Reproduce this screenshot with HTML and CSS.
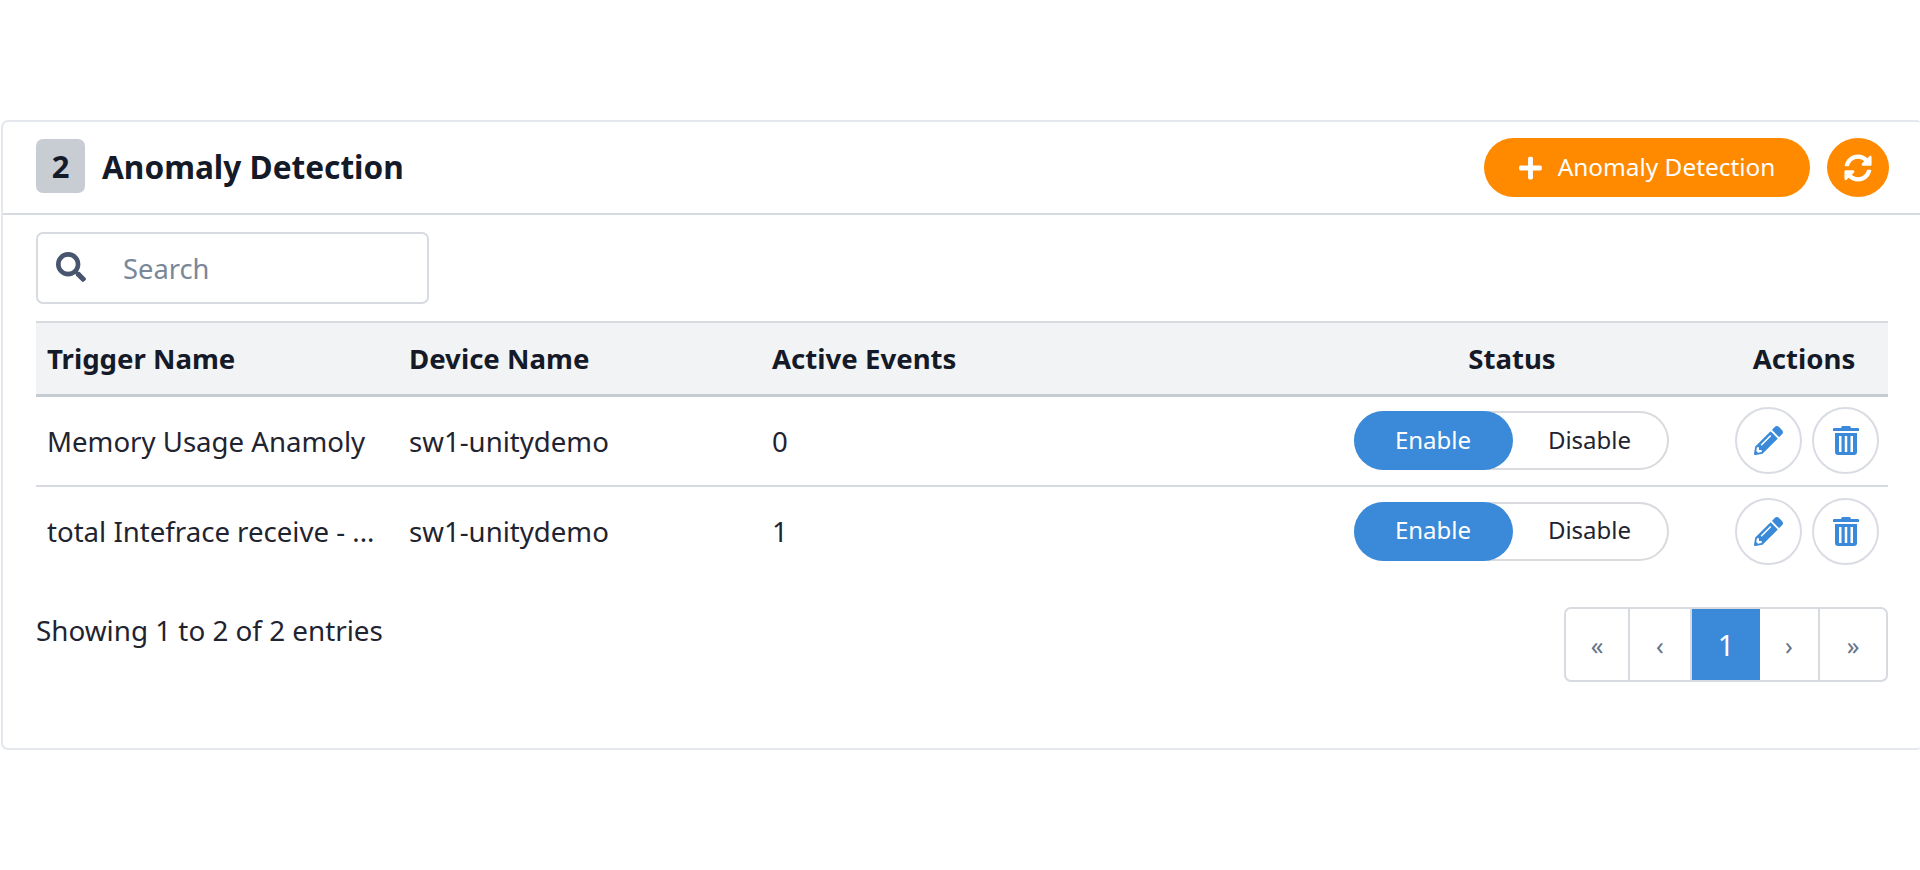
FILE: index.html
```html
<!DOCTYPE html>
<html lang="en">
<head>
<meta charset="utf-8">
<title>Anomaly Detection</title>
<link rel="stylesheet" href="styles.css">
</head>
<body>
<section class="card">
  <header class="card-head">
    <div class="title-wrap">
      <span class="badge">2</span>
      <h1 class="title">Anomaly Detection</h1>
    </div>
    <div class="head-actions">
      <button class="btn-add">
        <svg class="ico-plus" viewBox="0 0 448 512"><path d="M416 208H272V64c0-17.67-14.33-32-32-32h-32c-17.67 0-32 14.33-32 32v144H32c-17.67 0-32 14.33-32 32v32c0 17.67 14.33 32 32 32h144v144c0 17.67 14.33 32 32 32h32c17.67 0 32-14.33 32-32V304h144c17.67 0 32-14.33 32-32v-32c0-17.67-14.33-32-32-32z"/></svg>
        <span>Anomaly Detection</span>
      </button>
      <button class="btn-refresh" aria-label="Refresh">
        <svg class="ico-sync" viewBox="0 0 512 512"><path d="M370.72 133.28C339.458 104.008 298.888 87.962 255.848 88c-77.458.068-144.328 53.178-162.791 126.85-1.344 5.363-6.122 9.15-11.651 9.15H24.103c-7.498 0-13.194-6.807-11.807-14.176C33.933 94.924 134.813 8 256 8c66.448 0 126.791 26.136 171.315 68.685L463.03 40.97C478.149 25.851 504 36.559 504 57.941V192c0 13.255-10.745 24-24 24H345.941c-21.382 0-32.09-25.851-16.971-40.971l41.75-41.749zM32 296h134.059c21.382 0 32.09 25.851 16.971 40.971l-41.75 41.75c31.262 29.273 71.835 45.319 114.876 45.28 77.418-.07 144.315-53.144 162.787-126.849 1.344-5.363 6.122-9.15 11.651-9.15h57.304c7.498 0 13.194 6.807 11.807 14.176C478.067 417.076 377.187 504 256 504c-66.448 0-126.791-26.136-171.315-68.685L48.97 471.03C33.851 486.149 8 475.441 8 454.059V320c0-13.255 10.745-24 24-24z"/></svg>
      </button>
    </div>
  </header>
  <div class="card-body">
    <label class="search">
      <svg class="ico-search" viewBox="0 0 512 512"><path d="M505 442.7L405.3 343c-4.5-4.5-10.6-7-17-7H372c27.6-35.3 44-79.7 44-128C416 93.1 322.9 0 208 0S0 93.1 0 208s93.1 208 208 208c48.3 0 92.7-16.4 128-44v16.3c0 6.4 2.5 12.5 7 17l99.7 99.7c9.4 9.4 24.6 9.4 33.9 0l28.3-28.3c9.4-9.4 9.4-24.6.1-34zM208 336c-70.7 0-128-57.2-128-128 0-70.7 57.2-128 128-128 70.7 0 128 57.2 128 128 0 70.7-57.2 128-128 128z"/></svg>
      <span class="search-ph">Search</span>
    </label>
    <table class="grid">
      <colgroup>
        <col class="c-trigger"><col class="c-device"><col class="c-events"><col class="c-status"><col class="c-actions">
      </colgroup>
      <thead>
        <tr><th>Trigger Name</th><th>Device Name</th><th>Active Events</th><th class="center">Status</th><th class="center">Actions</th></tr>
      </thead>
      <tbody>
        <tr>
          <td>Memory Usage Anamoly</td><td>sw1-unitydemo</td><td>0</td>
          <td class="cell-toggle"><div class="toggle"><span class="opt on">Enable</span><span class="opt">Disable</span></div></td>
          <td class="cell-ctl"><div class="acts">
            <button class="circle" aria-label="Edit"><svg class="ico-pencil" viewBox="0 0 512 512"><path d="M497.9 142.1l-46.1 46.1c-4.7 4.7-12.3 4.7-17 0l-111-111c-4.7-4.7-4.7-12.3 0-17l46.1-46.1c18.7-18.7 49.1-18.7 67.9 0l60.1 60.1c18.8 18.7 18.8 49.1 0 67.9zM284.2 99.8L21.6 362.4.4 483.9c-2.9 16.4 11.4 30.6 27.8 27.8l121.5-21.3 262.6-262.6c4.7-4.7 4.7-12.3 0-17l-111-111c-4.8-4.7-12.4-4.7-17.1 0zM124.1 339.9c-5.5-5.5-5.5-14.3 0-19.8l154-154c5.5-5.5 14.3-5.5 19.8 0s5.5 14.3 0 19.8l-154 154c-5.5 5.5-14.3 5.5-19.8 0zM88 424h48v36.3l-64.5 11.3-31.1-31.1L51.7 376H88v48z"/></svg></button>
            <button class="circle" aria-label="Delete"><svg class="ico-trash" viewBox="0 0 26 29"><path fill-rule="evenodd" d="M9 0h8l1 2h7a1 1 0 0 1 1 1v2H0V3a1 1 0 0 1 1-1h7zM2 7h22v19a3 3 0 0 1-3 3H5a3 3 0 0 1-3-3zM6 10v16h2.5V10zM11.75 10v16h2.5V10zM17.5 10v16H20V10z"/></svg></button>
          </div></td>
        </tr>
        <tr>
          <td>total Intefrace receive - ...</td><td>sw1-unitydemo</td><td>1</td>
          <td class="cell-toggle"><div class="toggle"><span class="opt on">Enable</span><span class="opt">Disable</span></div></td>
          <td class="cell-ctl"><div class="acts">
            <button class="circle" aria-label="Edit"><svg class="ico-pencil" viewBox="0 0 512 512"><path d="M497.9 142.1l-46.1 46.1c-4.7 4.7-12.3 4.7-17 0l-111-111c-4.7-4.7-4.7-12.3 0-17l46.1-46.1c18.7-18.7 49.1-18.7 67.9 0l60.1 60.1c18.8 18.7 18.8 49.1 0 67.9zM284.2 99.8L21.6 362.4.4 483.9c-2.9 16.4 11.4 30.6 27.8 27.8l121.5-21.3 262.6-262.6c4.7-4.7 4.7-12.3 0-17l-111-111c-4.8-4.7-12.4-4.7-17.1 0zM124.1 339.9c-5.5-5.5-5.5-14.3 0-19.8l154-154c5.5-5.5 14.3-5.5 19.8 0s5.5 14.3 0 19.8l-154 154c-5.5 5.5-14.3 5.5-19.8 0zM88 424h48v36.3l-64.5 11.3-31.1-31.1L51.7 376H88v48z"/></svg></button>
            <button class="circle" aria-label="Delete"><svg class="ico-trash" viewBox="0 0 26 29"><path fill-rule="evenodd" d="M9 0h8l1 2h7a1 1 0 0 1 1 1v2H0V3a1 1 0 0 1 1-1h7zM2 7h22v19a3 3 0 0 1-3 3H5a3 3 0 0 1-3-3zM6 10v16h2.5V10zM11.75 10v16h2.5V10zM17.5 10v16H20V10z"/></svg></button>
          </div></td>
        </tr>
      </tbody>
    </table>
    <div class="foot">
      <p class="count">Showing 1 to 2 of 2 entries</p>
      <nav class="pager">
        <a class="pg pg-a">«</a><a class="pg pg-b">‹</a><a class="pg pg-cur">1</a><a class="pg pg-d">›</a><a class="pg pg-e">»</a>
      </nav>
    </div>
  </div>
</section>
</body>
</html>
```
FILE: styles.css
```css
* { box-sizing: border-box; }
html, body { margin: 0; background: #fff; }
body {
  padding: 120px 0 0 1px;
  font-family: "Noto Sans", "Open Sans", sans-serif;
  color: #1f2430;
}
.card {
  height: 630px;
  border: 2px solid #e4e7eb;
  border-right: 0;
  border-radius: 7px 3px 3px 7px;
}
.card-head {
  height: 93px;
  padding: 17px 31px 0 33px;
  display: flex;
  justify-content: space-between;
  align-items: flex-start;
  border-bottom: 2px solid #d7dbe0;
}
.title-wrap { display: flex; align-items: center; gap: 17px; }
.badge {
  width: 49px;
  height: 54px;
  display: flex;
  align-items: center;
  justify-content: center;
  background: #c8ccd3;
  border-radius: 7px;
  font-size: 31px;
  font-weight: 700;
  color: #151a28;
}
.title {
  margin: 0;
  font-size: 31.6px;
  font-weight: 700;
  color: #151a28;
}
.head-actions { display: flex; gap: 17px; margin-top: -1px; }
.btn-add, .btn-refresh {
  border: 0;
  background: #ff8a00;
  color: #fff;
  height: 59px;
  display: flex;
  align-items: center;
  justify-content: center;
  font-family: inherit;
  padding: 0;
}
.btn-add { width: 326px; border-radius: 30px; gap: 14px; font-size: 24.4px; }
.btn-add span { margin-top: -3px; }
.btn-refresh { width: 62px; border-radius: 50%; }
.ico-plus { width: 23px; height: 26px; fill: #fff; margin-right: 2px; }
.ico-sync { width: 28px; height: 28px; fill: #fff; }
.card-body { padding: 17px 32px 0 33px; }
.search {
  width: 393px;
  height: 72px;
  border: 2px solid #d7dbe0;
  border-radius: 7px;
  display: flex;
  align-items: center;
  padding: 0 0 0 18px;
  gap: 37px;
}
.ico-search { width: 30px; height: 30px; fill: #47556e; margin-top: -2px; }
.search-ph { font-size: 27.3px; color: #7a8799; }
.grid {
  width: 100%;
  margin-top: 17px;
  border-collapse: collapse;
  table-layout: fixed;
  font-size: 27.6px;
}
.c-trigger { width: 362px; }
.c-device { width: 363px; }
.c-events { width: 543px; }
.c-status { width: 416px; }
.c-actions { width: 168px; }
.grid th {
  height: 73px;
  padding: 0 11px;
  background: #f2f3f5;
  border-top: 2px solid #d7dbe0;
  border-bottom: 3px solid #c6cbd4;
  text-align: left;
  font-weight: 700;
  font-size: 27.6px;
  color: #151a28;
}
.grid td {
  height: 91px;
  padding: 0 11px;
  border-bottom: 2px solid #d7dbe0;
  white-space: nowrap;
}
.grid td.cell-ctl { padding: 0; }
.grid td.cell-toggle { padding: 0 2px 0 0; }
.grid tbody tr:last-child td { border-bottom: 0; height: 89px; }
.grid th.center { text-align: center; padding: 0; }
.toggle {
  width: 315px;
  height: 59px;
  margin: 0 auto;
  border: 2px solid #d8dadd;
  border-radius: 30px;
  display: flex;
  font-size: 24px;
}
.opt { flex: 1; display: flex; align-items: center; justify-content: center; padding-bottom: 3px; }
.opt.on {
  flex: 0 0 159px;
  margin: -2px 0 -2px -2px;
  background: #3a8ad9;
  color: #fff;
  border-radius: 30px;
}
.acts { display: flex; justify-content: center; gap: 10px; padding-left: 6px; }
.circle {
  width: 67px;
  height: 67px;
  border: 2px solid #d9dce2;
  border-radius: 50%;
  background: #fff;
  display: flex;
  align-items: center;
  justify-content: center;
  padding: 0;
  flex: none;
}
.ico-pencil { width: 29px; height: 29px; fill: #3a8ad9; }
.ico-trash { width: 26px; height: 29px; fill: #3a8ad9; }
.foot {
  display: flex;
  justify-content: space-between;
  align-items: flex-start;
  margin-top: 32px;
}
.count { margin: 4px 0 0; font-size: 27.8px; }
.pager {
  display: flex;
  height: 75px;
  border: 2px solid #d7dbe0;
  border-radius: 7px;
  overflow: hidden;
}
.pg {
  display: flex;
  align-items: center;
  justify-content: center;
  font-size: 25px;
  color: #64748b;
  border-right: 2px solid #d7dbe0;
}
.pg-a { width: 64px; }
.pg-b { width: 62px; }
.pg-cur {
  width: 68px;
  background: #3a8ad9;
  color: #fff;
  font-size: 29px;
  border-right: 0;
  margin: -2px 0;
}
.pg-d { width: 60px; }
.pg-e { width: 66px; border-right: 0; }
```
